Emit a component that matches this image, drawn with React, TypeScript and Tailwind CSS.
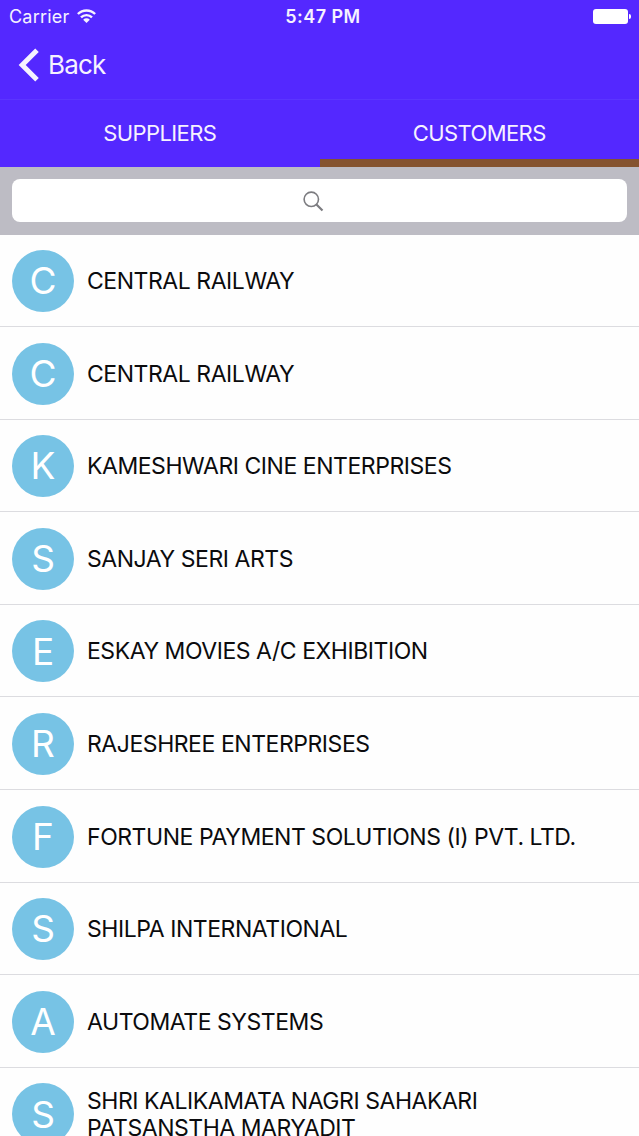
import { useState } from 'react';
import clsx from 'clsx';

type Tab = 'SUPPLIERS' | 'CUSTOMERS';

const TABS: Tab[] = ['SUPPLIERS', 'CUSTOMERS'];

const CUSTOMERS: string[] = [
  'CENTRAL RAILWAY',
  'CENTRAL RAILWAY',
  'KAMESHWARI CINE ENTERPRISES',
  'SANJAY SERI ARTS',
  'ESKAY MOVIES A/C EXHIBITION',
  'RAJESHREE ENTERPRISES',
  'FORTUNE PAYMENT SOLUTIONS (I) PVT. LTD.',
  'SHILPA INTERNATIONAL',
  'AUTOMATE SYSTEMS',
  'SHRI KALIKAMATA NAGRI SAHAKARI PATSANSTHA MARYADIT',
];

function WifiIcon() {
  return (
    <svg width="19" height="14" viewBox="0 0 19 14" fill="none" stroke="currentColor" strokeWidth="2.4">
      <path d="M0.9 5a12.2 12.2 0 0 1 17.2 0" />
      <path d="M4 8.4a7.8 7.8 0 0 1 11 0" />
      <path d="M9.5 14L6.2 10.7a4.7 4.7 0 0 1 6.6 0z" fill="currentColor" stroke="none" />
    </svg>
  );
}

function StatusBar() {
  return (
    <div className="grid h-8 grid-cols-[1fr_auto_1fr] items-center pr-2 pl-[9px] text-lg">
      <div className="flex items-center gap-2">
        <span className="pt-px tracking-[0.2px]">Carrier</span>
        <WifiIcon />
      </div>
      <span className="pt-px pl-[6px] font-semibold tracking-[0.45px]">5:47 PM</span>
      <div className="flex items-center justify-end gap-px">
        <div className="h-[15px] w-[35px] rounded-[3px] bg-white" />
        <div className="h-[5px] w-[2px] rounded-r-full bg-white" />
      </div>
    </div>
  );
}

function NavBar() {
  return (
    <div className="flex h-[68px] items-center border-b border-[#5b35ff] pb-[2px] pl-[18px]">
      <button type="button" className="flex items-center gap-[9px] text-[26px]">
        <svg width="21" height="34" viewBox="0 0 21 34" fill="none" stroke="currentColor" strokeWidth="5">
          <path d="M19 2.2L4.2 17L19 31.8" />
        </svg>
        <span className="tracking-[-0.8px]">Back</span>
      </button>
    </div>
  );
}

function CustomerRow({ name }: { name: string }) {
  return (
    <li className="flex h-[92.6px] items-center gap-[13px] border-b border-[#dcdce0] pt-[1.5px] pl-3">
      <div className="flex size-[62px] shrink-0 items-center justify-center rounded-full bg-[#77c3e5] text-[37px] text-white">
        {name[0]}
      </div>
      <span className="w-[500px] pt-px text-[23px] leading-[27px] tracking-[-0.45px] text-[#0b0b0d]">{name}</span>
    </li>
  );
}

export default function App() {
  const [active, setActive] = useState<Tab>('CUSTOMERS');
  const [query, setQuery] = useState('');

  const rows = CUSTOMERS.filter((name) => name.includes(query.toUpperCase()));

  return (
    <div className="flex h-[1136px] w-[639px] flex-col overflow-hidden bg-[#fefefe] font-['Inter',sans-serif]">
      <header className="shrink-0 bg-[#5428ff] text-[#f6f2ff]">
        <StatusBar />
        <NavBar />
        <div className="grid h-[66.5px] grid-cols-2">
          {TABS.map((tab) => (
            <button
              key={tab}
              type="button"
              onClick={() => setActive(tab)}
              className={clsx(
                'border-b-8 pt-2 text-[22px] tracking-[-0.6px]',
                tab === active ? 'border-[#85532f]' : 'border-transparent',
              )}
            >
              {tab}
            </button>
          ))}
        </div>
      </header>

      <div className="flex h-[68px] shrink-0 items-center bg-[#bdbcc4] px-3">
        <label className="flex h-[43px] w-full items-center justify-center rounded-lg bg-white pt-px">
          <svg width="21" height="21" viewBox="0 0 21 21" fill="none" stroke="#7c7c80">
            <circle cx="8.3" cy="8.3" r="7.2" strokeWidth="1.6" />
            <path d="M13.5 13.5l6 6" strokeWidth="2.2" />
          </svg>
          <input
            value={query}
            onChange={(e) => setQuery(e.target.value)}
            className="w-3 outline-none"
          />
        </label>
      </div>

      <ul>
        {rows.map((name, i) => (
          <CustomerRow key={i} name={name} />
        ))}
      </ul>
    </div>
  );
}
